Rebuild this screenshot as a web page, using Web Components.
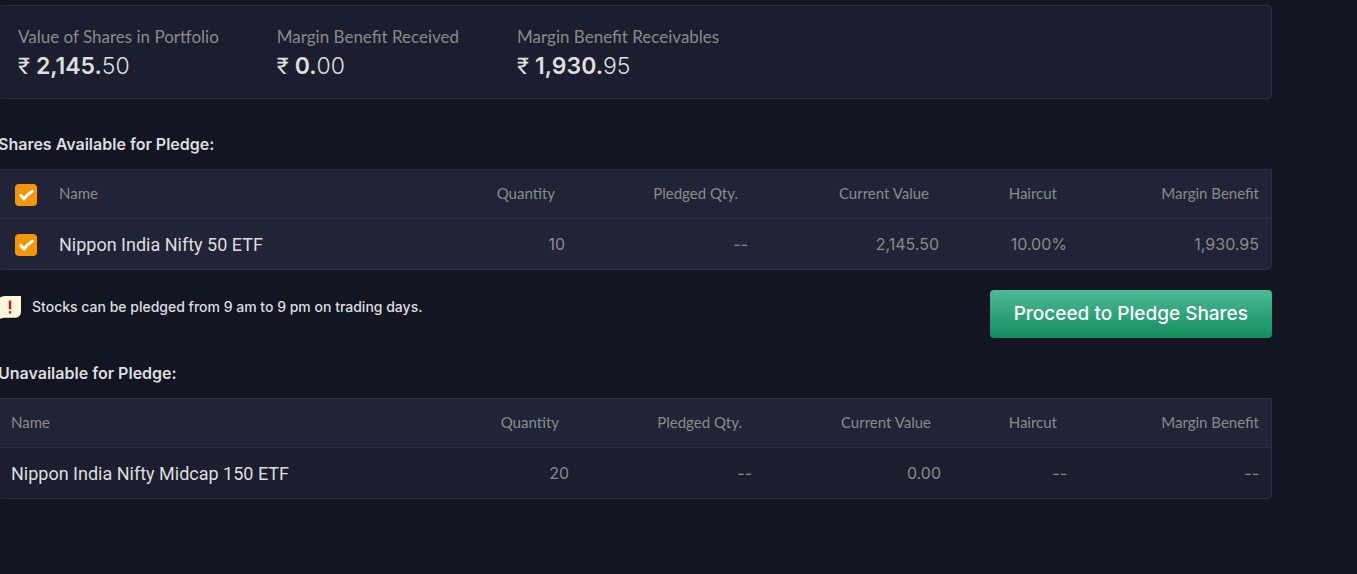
<!DOCTYPE html>
<html lang="en">
<head>
<meta charset="utf-8">
<title>Pledge Shares</title>
<style>
  :root {
    --bg: #121522; --card: #1b1e2e; --head: #202436; --line: #2b2f45;
    --muted: #8a8a8c; --text: #dededf;
  }
  body { margin: 0; background: var(--bg); color: var(--text); font-family: Inter, "Liberation Sans", sans-serif; }
</style>
</head>
<body>
<pledge-page></pledge-page>
<script>
const define = (name, html, setup) => customElements.define(name, class extends HTMLElement {
  connectedCallback() {
    if (this.shadowRoot) return;
    const root = this.attachShadow({ mode: 'open' });
    root.innerHTML = html;
    if (setup) setup(this, root);
  }
});

define('stat-item', `
  <style>
    :host { display: block; }
    .label { color: var(--muted); font-family: Lato, sans-serif; font-size: 17px; line-height: 24px; }
    .value { font-size: 23px; line-height: 34px; font-weight: 300; white-space: nowrap; }
    .cur { font-weight: 400; margin-right: 6px; font-family: Roboto, sans-serif; }
    b { font-weight: 600; }
  </style>
  <div class="label"><slot></slot></div>
  <div class="value"><span class="cur">₹</span><b></b><span class="dec"></span></div>`,
  (el, root) => {
    const [whole, dec] = el.getAttribute('value').split('.');
    root.querySelector('b').textContent = whole + '.';
    root.querySelector('.dec').textContent = dec;
  });

define('summary-card', `
  <style>
    :host { display: flex; gap: 58px; background: var(--card); border: 1px solid var(--line);
      border-radius: 4px; padding: 19px 19px 14px; }
  </style><slot></slot>`);

define('section-title', `
  <style>
    :host { display: block; }
    h2 { margin: 0; font-size: 16px; line-height: 24px; font-weight: 600; }
  </style><h2><slot></slot></h2>`);

define('holdings-table', `
  <style>
    :host { display: block; border: 1px solid var(--line); border-radius: 0 0 4px 4px; overflow: hidden; background: var(--card); }
    table { width: 100%; table-layout: fixed; border-collapse: separate; border-spacing: 0; }
    .c-check { width: 58px; } .c-qty { width: 140px; } .c-pledged { width: 183px; }
    .c-value { width: 191px; } .c-cut { width: 128px; } .c-margin { width: 192px; }
    :host(:not([selectable])) .c-value { width: 189px; }
    :host(:not([selectable])) .c-cut { width: 126px; }
    th, td { padding: 0 12px; text-align: right; white-space: nowrap; color: var(--muted); font-weight: 400; }
    th { height: 46px; padding-bottom: 2px; background: var(--head); border-bottom: 1px solid var(--line); font-family: Lato, sans-serif; font-size: 15px; padding-right: 22px; }
    th:last-child { padding-right: 12px; }
    td { height: 50px; font-size: 16px; }
    .name { text-align: left; }
    .check { text-align: left; padding: 2px 0 0 16px; }
    th.check { height: 46px; }
    td.check { height: 48px; }
    .check + .name { padding-left: 2px; }
    td.name { color: var(--text); font-family: Roboto, sans-serif; font-size: 18px; }
    :host([selectable]) td { background: var(--head); }
    input { appearance: none; display: block; box-sizing: border-box; width: 22px; height: 22px; margin: 0; border-radius: 4px; background: #f2960b; }
    .box { display: grid; width: 22px; }
    .box > * { grid-area: 1 / 1; }
    .box svg { pointer-events: none; display: block; }
    input:not(:checked) + svg { visibility: hidden; }
  </style>
  <table>
    <colgroup></colgroup><thead><tr></tr></thead><tbody></tbody>
  </table>`,
  (el, root) => {
    const check = el.hasAttribute('selectable');
    const box = label => `<span class="box"><input type="checkbox" checked aria-label="${label}">
      <svg width="22" height="22" viewBox="0 0 22 22" fill="none" stroke="#fff" stroke-width="3" stroke-linecap="round" stroke-linejoin="round"><path d="M5.8 11.3L9 15Q12 10.5 17.3 7.3"/></svg></span>`;
    root.querySelector('colgroup').innerHTML = (check ? '<col class="c-check">' : '') +
      '<col><col class="c-qty"><col class="c-pledged"><col class="c-value"><col class="c-cut"><col class="c-margin">';
    const heads = ['Quantity', 'Pledged Qty.', 'Current Value', 'Haircut', 'Margin Benefit'];
    root.querySelector('thead tr').innerHTML = (check ? `<th class="check">${box('Select all')}</th>` : '') +
      '<th class="name" scope="col">Name</th>' + heads.map(h => `<th scope="col">${h}</th>`).join('');
    const [name, ...cells] = el.getAttribute('row').split('|');
    root.querySelector('tbody').innerHTML = `<tr>${check ? `<td class="check">${box('Select ' + name)}</td>` : ''}
      <td class="name">${name}</td>${cells.map(c => `<td>${c}</td>`).join('')}</tr>`;
  });

define('info-note', `
  <style>
    :host { display: flex; align-items: flex-start; gap: 11px; font-weight: 500; font-size: 14px; line-height: 22px; }
    svg { display: block; }
  </style>
  <svg width="23" height="24" viewBox="0 0 23 24" aria-hidden="true">
    <path d="M7 0H23V15Q23 21.7 17 21.7H6Q3 22 0 24V7Q0 0 7 0Z" fill="#fff7dc"/>
    <path d="M12 4.7V13.3M12 15.3V17.4" stroke="#c9161d" stroke-width="2.4"/>
  </svg>
  <span><slot></slot></span>`);

define('primary-button', `
  <style>
    :host { display: block; }
    button { display: block; border: 0; border-radius: 4px; padding: 0 24px; height: 48px; color: #fff;
      background: linear-gradient(#4dba96, #148c5d); font: 500 19px/24px Inter, "Liberation Sans", sans-serif; cursor: pointer; }
  </style><button type="button"><slot></slot></button>`);

define('pledge-page', `
  <style>
    :host { display: block; margin: 0 85px 0 -2px; padding-top: 5px; }
    section-title { padding: 33px 0 13px; }
    .actions { display: flex; justify-content: space-between; align-items: flex-start; padding-top: 20px; }
    info-note { padding-top: 6px; }
    .second { padding: 23px 0 13px; }
  </style>
  <summary-card>
    <stat-item value="2,145.50">Value of Shares in Portfolio</stat-item>
    <stat-item value="0.00">Margin Benefit Received</stat-item>
    <stat-item value="1,930.95">Margin Benefit Receivables</stat-item>
  </summary-card>
  <section-title>Shares Available for Pledge:</section-title>
  <holdings-table selectable row="Nippon India Nifty 50 ETF|10|--|2,145.50|10.00%|1,930.95"></holdings-table>
  <div class="actions">
    <info-note>Stocks can be pledged from 9 am to 9 pm on trading days.</info-note>
    <primary-button>Proceed to Pledge Shares</primary-button>
  </div>
  <section-title class="second">Unavailable for Pledge:</section-title>
  <holdings-table row="Nippon India Nifty Midcap 150 ETF|20|--|0.00|--|--"></holdings-table>`);
</script>
</body>
</html>
